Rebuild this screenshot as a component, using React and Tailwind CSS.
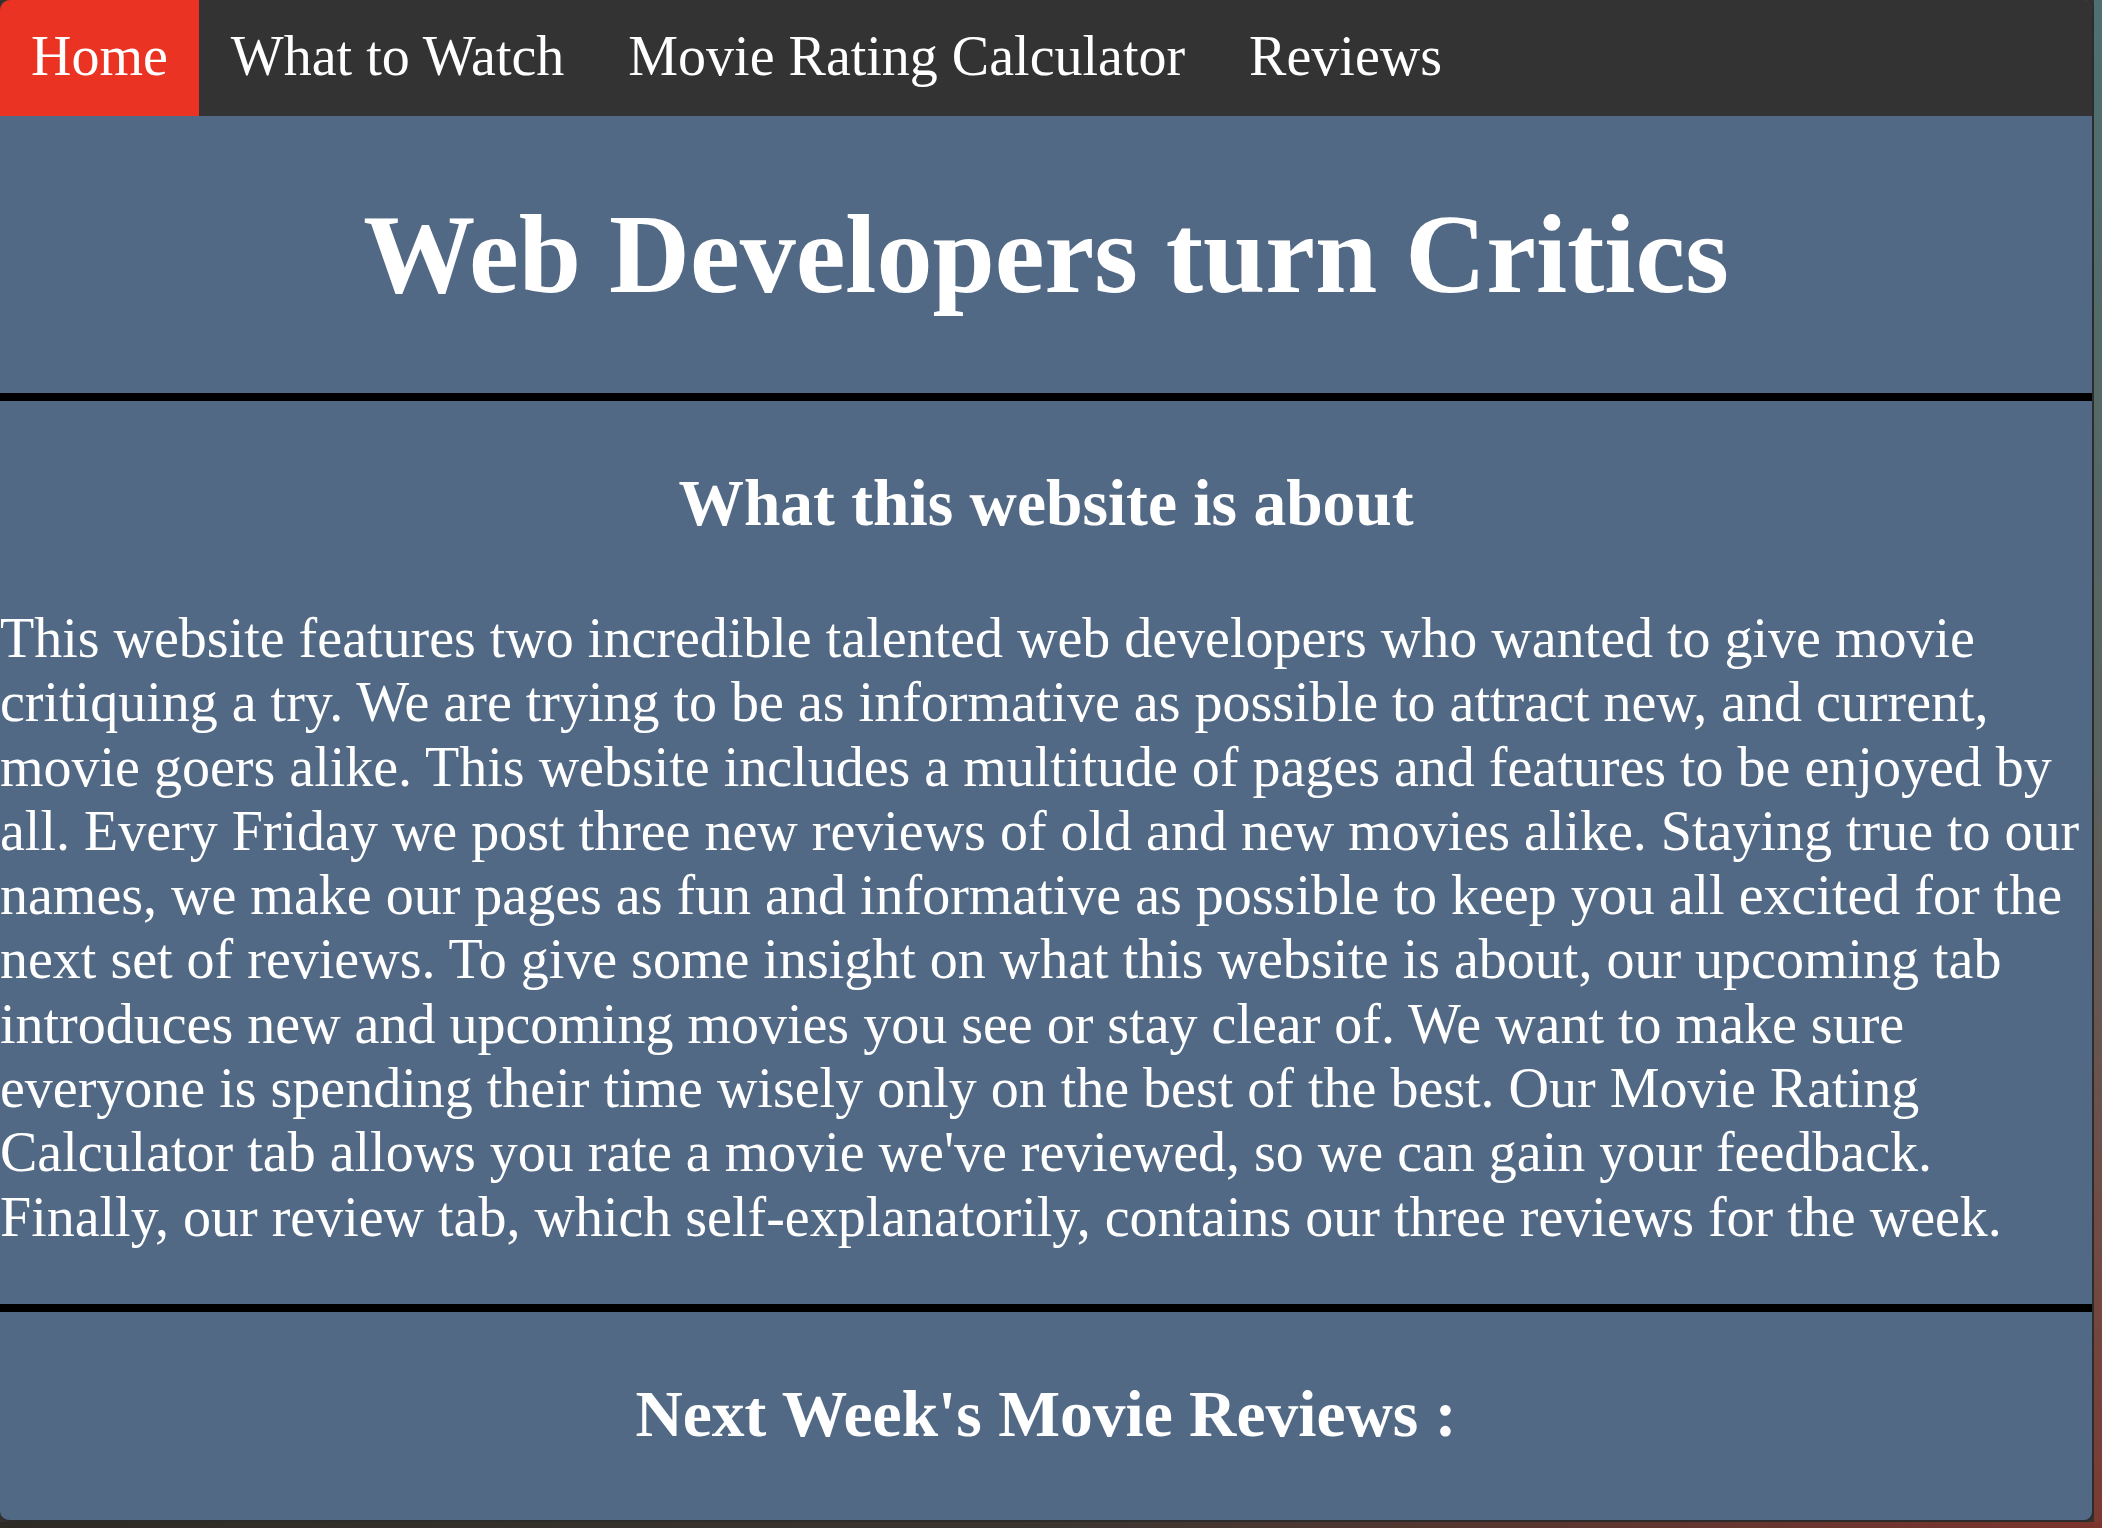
import React from "react";

const serif = "font-['Liberation_Serif','Times_New_Roman',serif]";

export default function App() {
  const links = ["Home", "What to Watch", "Movie Rating Calculator", "Reviews"];
  return (
    <div className={`w-[2102px] h-[1528px] overflow-hidden bg-[#35322e] flex flex-col ${serif}`}>
      <div className="flex">
        <div className="w-[2094px] h-[1522px] shrink-0 rounded-[10px] overflow-hidden border-r-2 border-b-2 border-[#2c2c2c] bg-[#526985] text-white">
          <nav className="flex h-[116px] bg-[#333333]">
            {links.map((l, i) => (
              <a
                key={l}
                className={`flex items-center pb-[4px] text-[56px] leading-[64px] ${
                  i === 0 ? "bg-[#eb3324] px-[31px]" : "px-[32px]"
                }`}
              >
                {l}
              </a>
            ))}
          </nav>
          <header className="border-b-8 border-black">
            <h1 className="text-center font-bold text-[112px] leading-[129px] py-[74px]">
              Web Developers turn Critics
            </h1>
          </header>
          <section className="border-b-8 border-black pt-[65px] pb-[55px]">
            <h3 className="text-center font-bold text-[65.5px] leading-[75px]">
              What this website is about
            </h3>
            <p className="mt-[65px] text-[56px] leading-[64.3px]">
              This website features two incredible talented web developers who wanted to give movie
              critiquing a try. We are trying to be as informative as possible to attract new, and current,
              movie goers alike. This website includes a multitude of pages and features to be enjoyed by
              all. Every Friday we post three new reviews of old and new movies alike. Staying true to our
              names, we make our pages as fun and informative as possible to keep you all excited for the
              next set of reviews. To give some insight on what this website is about, our upcoming tab
              introduces new and upcoming movies you see or stay clear of. We want to make sure
              everyone is spending their time wisely only on the best of the best. Our Movie Rating
              Calculator tab allows you rate a movie we've reviewed, so we can gain your feedback.
              Finally, our review tab, which self-explanatorily, contains our three reviews for the week.
            </p>
          </section>
          <section className="pt-[65px]">
            <h3 className="text-center font-bold text-[65.5px] leading-[75px]">
              Next Week's Movie Reviews :
            </h3>
          </section>
        </div>
        <div className="w-[8px] h-[1522px] bg-gradient-to-b from-[#4e7071] via-[#59625f] to-[#7a3a33]" />
      </div>
      <div className="h-[6px] w-full bg-gradient-to-r from-[#2e2b27] via-[#3b3531] to-[#7c342d]" />
    </div>
  );
}
